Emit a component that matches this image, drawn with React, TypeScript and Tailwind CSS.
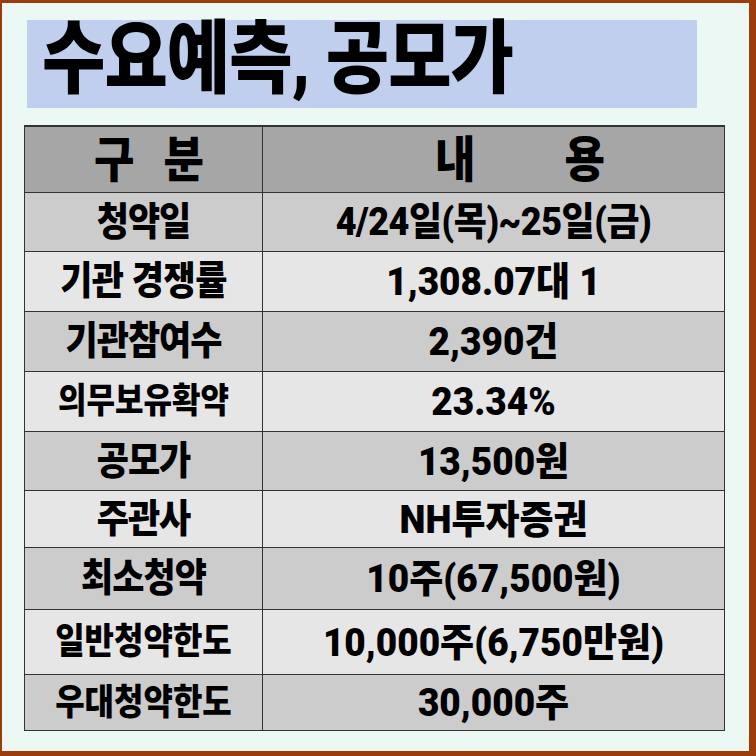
import React from "react";

const FONT = { fontFamily: 'Roboto, "Noto Sans CJK KR", sans-serif' };

type Row = {
  label: string;
  value: string;
  h: string;
  bg: string;
  labelCls: string;
  valueCls: string;
};

const rows: Row[] = [
  { label: "청약일", value: "4/24일(목)~25일(금)", h: "h-[59px]", bg: "bg-[#cccccc]", labelCls: "text-[35px] tracking-[-1px]", valueCls: "text-[36px] tracking-[-0.5px]" },
  { label: "기관 경쟁률", value: "1,308.07대 1", h: "h-[60px]", bg: "bg-[#e6e6e6]", labelCls: "text-[35px] tracking-[-0.5px]", valueCls: "text-[37px]" },
  { label: "기관참여수", value: "2,390건", h: "h-[60px]", bg: "bg-[#cccccc]", labelCls: "text-[35px] tracking-[-1px]", valueCls: "text-[37px]" },
  { label: "의무보유확약", value: "23.34%", h: "h-[60px]", bg: "bg-[#e6e6e6]", labelCls: "text-[31px]", valueCls: "text-[37px]" },
  { label: "공모가", value: "13,500원", h: "h-[59px]", bg: "bg-[#cccccc]", labelCls: "text-[35px] tracking-[-1px]", valueCls: "text-[37px]" },
  { label: "주관사", value: "NH투자증권", h: "h-[57px]", bg: "bg-[#e6e6e6]", labelCls: "text-[35px] tracking-[-1px]", valueCls: "text-[37px]" },
  { label: "최소청약", value: "10주(67,500원)", h: "h-[62px]", bg: "bg-[#cccccc]", labelCls: "text-[35px] tracking-[-1px]", valueCls: "text-[37px]" },
  { label: "일반청약한도", value: "10,000주(6,750만원)", h: "h-[65px]", bg: "bg-[#e6e6e6]", labelCls: "text-[32px]", valueCls: "text-[37px]" },
  { label: "우대청약한도", value: "30,000주", h: "h-[55px]", bg: "bg-[#cccccc]", labelCls: "text-[32px]", valueCls: "text-[37px]" },
];

export default function App() {
  return (
    <div className="w-[756px] h-[756px] bg-[#9c3c0a] pt-[3px] pl-[2px] pr-[7px] pb-[5px]" style={FONT}>
      <div className="h-full bg-[#ebf8f4] pt-[17px] pl-[22px] flex flex-col">
        <div className="ml-[3px] w-[670px] h-[88px] bg-[#c1cfef] flex items-center pl-[15px]">
          <span className="inline-block origin-left scale-x-[0.86] text-[80px] font-black text-black leading-none tracking-[-1px] whitespace-nowrap pb-[10px]">
            수요예측, 공모가
          </span>
        </div>
        <div className="mt-[17px] w-[701px] border border-[#333] border-t-2 flex flex-col">
          <div className="h-[66px] bg-[#a6a6a6] grid grid-cols-[238px_1fr] border-b border-[#333]">
            <div className="border-r border-[#333] flex items-center pl-[69px] gap-[29px]">
              <span className="inline-block scale-y-[1.12] text-[44px] font-black leading-none">구</span>
              <span className="inline-block scale-y-[1.12] text-[44px] font-black leading-none">분</span>
            </div>
            <div className="flex items-center pl-[172px] gap-[89px]">
              <span className="inline-block scale-y-[1.12] text-[44px] font-black leading-none">내</span>
              <span className="inline-block scale-y-[1.12] text-[44px] font-black leading-none">용</span>
            </div>
          </div>
          {rows.map((r, i) => (
            <div
              key={i}
              className={`${r.h} ${r.bg} grid grid-cols-[238px_1fr] ${i < rows.length - 1 ? "border-b border-[#333]" : ""}`}
            >
              <div className="border-r border-[#333] flex items-center justify-center">
                <span className={`${r.labelCls} inline-block scale-y-[1.12] font-black leading-none whitespace-nowrap`}>{r.label}</span>
              </div>
              <div className="flex items-center justify-center">
                <span className={`${r.valueCls} inline-block scale-y-[1.06] font-black leading-none whitespace-nowrap`}>{r.value}</span>
              </div>
            </div>
          ))}
        </div>
      </div>
    </div>
  );
}
